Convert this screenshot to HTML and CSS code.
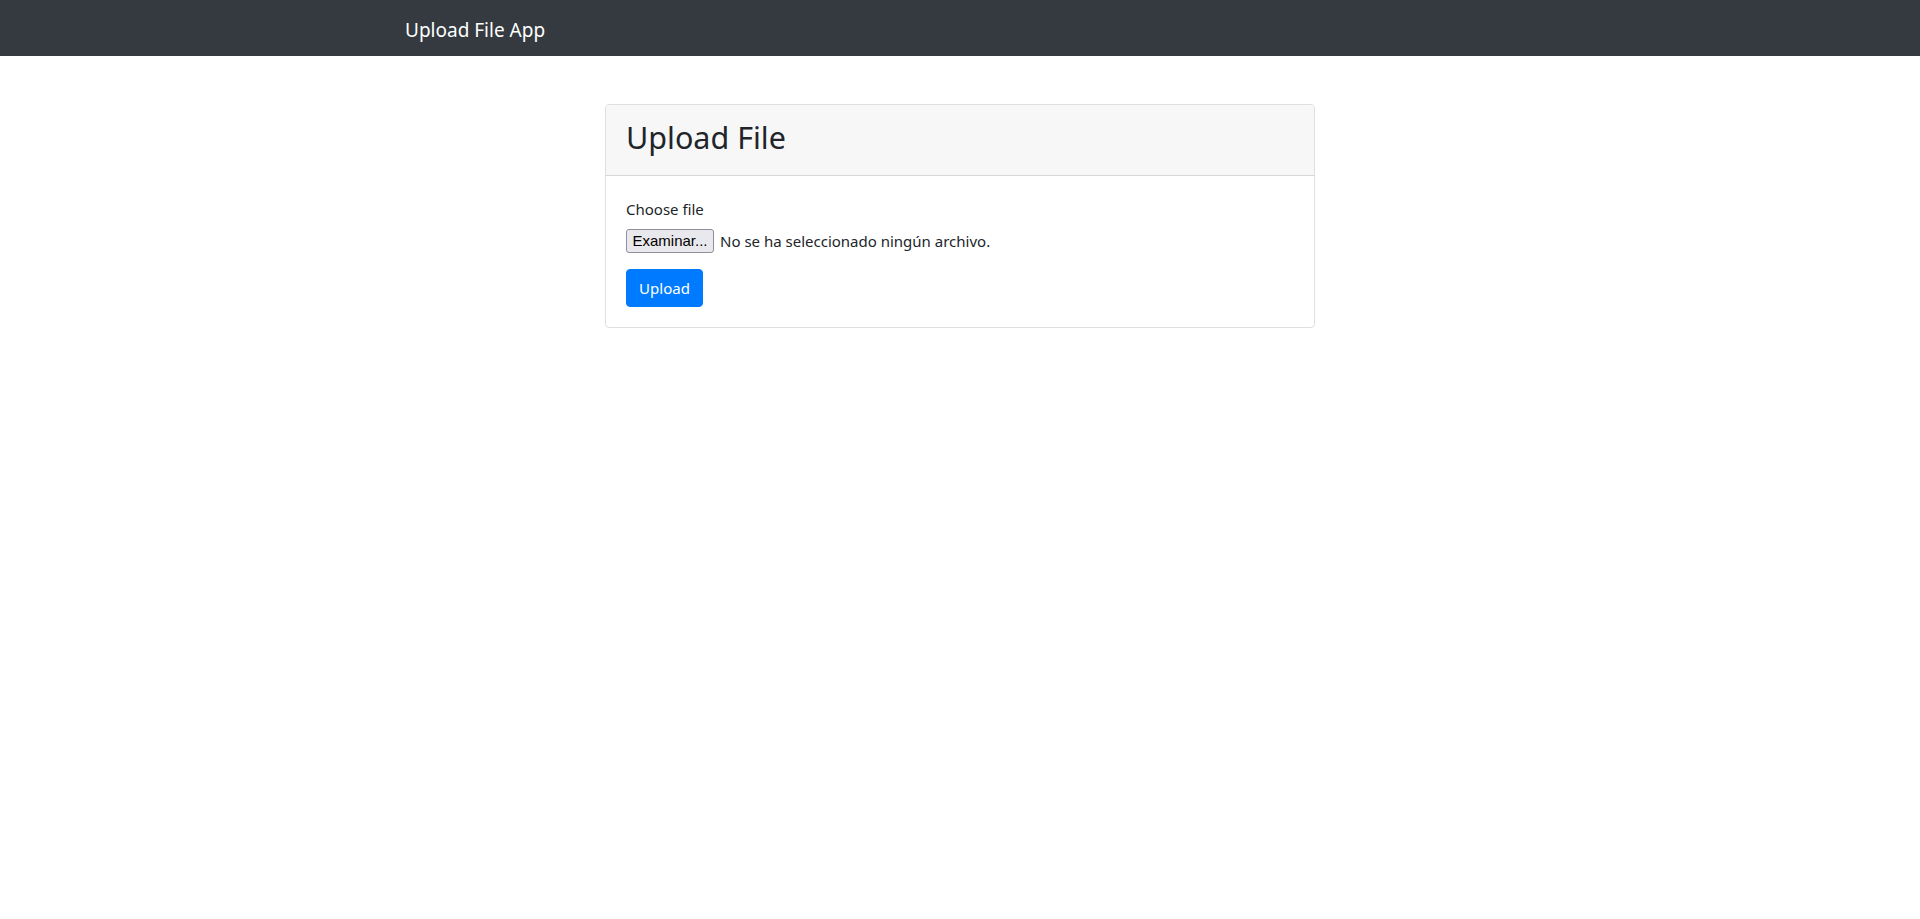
FILE: index.html
```html
<!DOCTYPE html>
<html lang="es">
<head>
<meta charset="utf-8">
<title>Upload File App</title>
<link rel="stylesheet" href="styles.css">
</head>
<body>
<nav class="navbar">
  <div class="container">
    <a class="brand" href="#">Upload File App</a>
  </div>
</nav>
<main class="main">
  <div class="card">
    <div class="card-header">
      <h2 class="card-title">Upload File</h2>
    </div>
    <div class="card-body">
      <form class="form">
        <div class="form-group">
          <label class="label">Choose file</label>
          <div class="file-input">
            <button type="button" class="file-btn">Examinar...</button>
            <span class="file-name">No se ha seleccionado ningún archivo.</span>
          </div>
        </div>
        <button type="button" class="btn-primary">Upload</button>
      </form>
    </div>
  </div>
</main>
</body>
</html>
```
FILE: styles.css
```css
* { box-sizing: border-box; }
html, body { margin: 0; padding: 0; }
body {
  font-family: "Segoe UI", "Noto Sans", "Open Sans", sans-serif;
  font-size: 15px;
  line-height: 24px;
  color: #212529;
  background: #fff;
}
.navbar {
  background: #343a40;
  height: 56px;
  display: flex;
  align-items: center;
}
.container {
  width: 1140px;
  margin: 0 auto;
  padding: 0 15px;
}
.brand {
  color: #fff;
  text-decoration: none;
  font-size: 19px;
  line-height: 30px;
  display: inline-block;
  padding: 5px 0 2px;
}
.main {
  display: flex;
  justify-content: center;
  padding-top: 48px;
}
.card {
  width: 710px;
  border: 1px solid rgba(0,0,0,.125);
  border-radius: 4px;
  overflow: hidden;
}
.card-header {
  background: #f7f7f7;
  border-bottom: 1px solid rgba(0,0,0,.125);
  padding: 13px 20px 11px;
}
.card-title {
  margin: 0 0 8px;
  font-size: 30.5px;
  font-weight: 400;
  line-height: 38px;
}
.card-body {
  padding: 21px 20px 20px;
}
.form-group { margin-bottom: 16px; }
.label {
  display: inline-block;
  margin-bottom: 8px;
}
.file-input {
  display: flex;
  align-items: center;
  height: 24px;
  gap: 6px;
}
.file-btn {
  font-family: "Liberation Sans", Arial, sans-serif;
  font-size: 15px;
  color: #000;
  background: #e9e9ed;
  border: 1px solid #8f8f9d;
  border-radius: 3px;
  height: 24px;
  width: 88px;
  padding: 0;
  line-height: 22px;
}
.file-name {
  font-size: 15px;
}
.btn-primary {
  font-family: inherit;
  font-size: 15px;
  line-height: 24px;
  color: #fff;
  background: #007bff;
  border: 1px solid #007bff;
  border-radius: 4px;
  padding: 6px 12px;
  width: 77px;
}
```
